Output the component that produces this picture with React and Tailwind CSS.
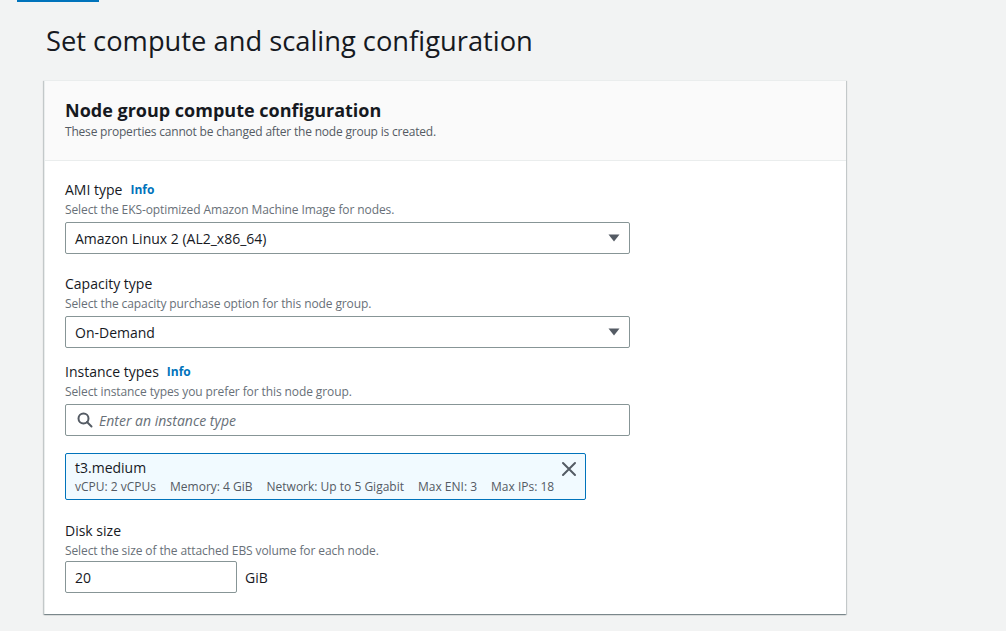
import React from "react";

const font = { fontFamily: '"Open Sans", "Noto Sans", Arial, sans-serif' };

function Caret() {
  return (
    <svg width="12" height="8" viewBox="0 0 12 8" className="shrink-0">
      <path d="M0.5 0.5 L11.5 0.5 L6 7.5 Z" fill="#545b64" />
    </svg>
  );
}

function Label({ children, info }) {
  return (
    <div className="flex items-center gap-2 h-5">
      <span className="text-[14px] leading-5 text-[#16191f]">{children}</span>
      {info && <span className="text-[12px] font-bold text-[#0073bb]">Info</span>}
    </div>
  );
}

function Desc({ children }) {
  return <div className="text-[12px] leading-4 text-[#687078] mt-[2px] tracking-[-0.1px]">{children}</div>;
}

function Select({ value }) {
  return (
    <div className="mt-1 w-[565px] h-8 border border-[#879596] rounded-[2px] bg-white flex items-center justify-between pl-[9px] pr-[9px]">
      <span className="text-[14px] text-[#16191f]">{value}</span>
      <Caret />
    </div>
  );
}

export default function App() {
  return (
    <div style={font} className="min-h-[631px] w-[1006px] bg-[#f2f3f3] relative">
      <div className="absolute left-[17px] top-0 w-[82px] h-[2px] bg-[#0073bb]" />
      <div className="pt-[22px] pl-[46px]">
        <h1 className="text-[27.3px] leading-[38px] font-normal text-[#16191f]">
          Set compute and scaling configuration
        </h1>
      </div>
      <div className="ml-[44px] mt-[20px] w-[802px] bg-white border-t border-l border-[#eaeded] shadow-[0_1px_1px_0_rgba(0,28,36,0.3),1px_1px_1px_0_rgba(0,28,36,0.15),-1px_1px_1px_0_rgba(0,28,36,0.15)]">
        <div className="bg-[#fafafa] border-b border-[#eaeded] px-5 pt-[18px] pb-[20px]">
          <h2 className="text-[18px] leading-[22px] font-bold text-[#16191f]">
            Node group compute configuration
          </h2>
          <div className="text-[12px] leading-4 text-[#545b64] mt-[3px] tracking-[-0.2px]">
            These properties cannot be changed after the node group is created.
          </div>
        </div>
        <div className="px-5 pt-[19px] pb-[21px]">
          <Label info>AMI type</Label>
          <Desc>Select the EKS-optimized Amazon Machine Image for nodes.</Desc>
          <Select value="Amazon Linux 2 (AL2_x86_64)" />

          <div className="mt-[20px]">
            <Label>Capacity type</Label>
            <Desc>Select the capacity purchase option for this node group.</Desc>
            <Select value="On-Demand" />
          </div>

          <div className="mt-[14px]">
            <Label info>Instance types</Label>
            <Desc>Select instance types you prefer for this node group.</Desc>
            <div className="mt-1 w-[565px] h-8 border border-[#879596] rounded-[2px] bg-white flex items-center pl-[11px]">
              <svg width="16" height="16" viewBox="0 0 16 16" fill="none" stroke="#545b64" strokeWidth="2">
                <circle cx="6.5" cy="6.5" r="5" />
                <path d="M10 10 L14.5 14.5" strokeLinecap="round" />
              </svg>
              <span className="ml-[6px] text-[14px] italic text-[#687078]">Enter an instance type</span>
            </div>
            <div className="mt-[17px] w-[521px] h-[47px] border border-[#0073bb] rounded-[2px] bg-[#f1faff] pl-[9px] pr-[8px] pt-[4px] flex justify-between">
              <div>
                <div className="text-[14px] leading-5 text-[#16191f]">t3.medium</div>
                <div className="flex gap-[14px] text-[12px] leading-4 text-[#545b64] mt-[1px]">
                  <span>vCPU: 2 vCPUs</span>
                  <span>Memory: 4 GiB</span>
                  <span>Network: Up to 5 Gigabit</span>
                  <span>Max ENI: 3</span>
                  <span>Max IPs: 18</span>
                </div>
              </div>
              <svg width="16" height="16" viewBox="0 0 16 16" className="mt-[3px]" stroke="#545b64" strokeWidth="2" strokeLinecap="round">
                <path d="M2 2 L14 14 M14 2 L2 14" />
              </svg>
            </div>
          </div>

          <div className="mt-[21px]">
            <Label>Disk size</Label>
            <Desc>Select the size of the attached EBS volume for each node.</Desc>
            <div className="mt-[2px] flex items-center">
              <div className="w-[172px] h-8 border border-[#879596] rounded-[2px] bg-white flex items-center pl-[9px]">
                <span className="text-[14px] text-[#16191f]">20</span>
              </div>
              <span className="ml-[8px] text-[14px] text-[#16191f]">GiB</span>
            </div>
          </div>
        </div>
      </div>
    </div>
  );
}
